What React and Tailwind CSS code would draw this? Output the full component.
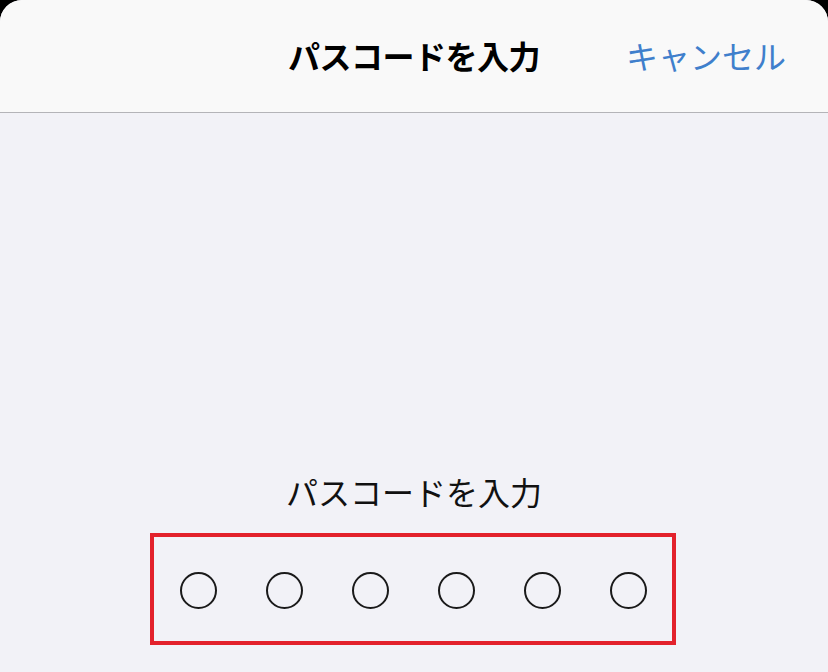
export default function App() {
  const font = { fontFamily: '"Noto Sans CJK JP", "Noto Sans", sans-serif' };
  return (
    <div className="w-[828px] h-[672px] bg-black overflow-hidden" style={font}>
      <div className="h-full rounded-t-[22px] overflow-hidden bg-[#f2f2f7] flex flex-col">
        <div className="h-[113px] shrink-0 bg-[#f9f9f9] border-b border-[#b4b4b8] grid grid-cols-[1fr_auto_1fr] items-center pb-[2px]">
          <div />
          <div className="text-[32px] leading-[40px] font-bold text-black tracking-[-0.5px]">パスコードを入力</div>
          <div className="flex justify-end pr-[42px]">
            <span className="text-[32px] leading-[40px] text-[#3f7fcc]">キャンセル</span>
          </div>
        </div>
        <div className="flex flex-col items-center pt-[358px]">
          <div className="text-[32px] leading-[40px] text-[#111]">パスコードを入力</div>
          <div className="mt-[22px] w-[526px] h-[112px] border-[4px] border-[#e3222c] flex items-center justify-center gap-[49px] pl-[1px] pt-[3px] mr-[2px]">
            {[0, 1, 2, 3, 4, 5].map((i) => (
              <div key={i} className="w-[37px] h-[37px] rounded-full border-2 border-[#1a1a1a]" />
            ))}
          </div>
        </div>
      </div>
    </div>
  );
}
